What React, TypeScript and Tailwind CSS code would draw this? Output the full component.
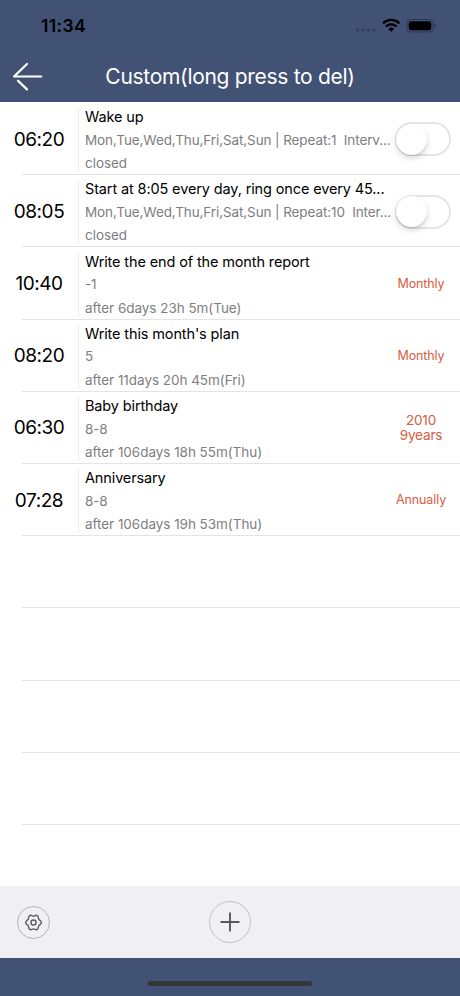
import { useState } from "react";

type Alarm = {
  time: string;
  title: string;
  detail: string;
  status: string;
  tags?: string[];
  large?: boolean;
};

const alarms: Alarm[] = [
  {
    time: "06:20",
    title: "Wake up",
    detail: "Mon,Tue,Wed,Thu,Fri,Sat,Sun | Repeat:1  Interv...",
    status: "closed",
  },
  {
    time: "08:05",
    title: "Start at 8:05 every day, ring once every 45...",
    detail: "Mon,Tue,Wed,Thu,Fri,Sat,Sun | Repeat:10  Inter...",
    status: "closed",
  },
  {
    time: "10:40",
    title: "Write the end of the month report",
    detail: "-1",
    status: "after 6days 23h 5m(Tue)",
    tags: ["Monthly"],
  },
  {
    time: "08:20",
    title: "Write this month's plan",
    detail: "5",
    status: "after 11days 20h 45m(Fri)",
    tags: ["Monthly"],
  },
  {
    time: "06:30",
    title: "Baby birthday",
    detail: "8-8",
    status: "after 106days 18h 55m(Thu)",
    tags: ["2010", "9years"],
    large: true,
  },
  {
    time: "07:28",
    title: "Anniversary",
    detail: "8-8",
    status: "after 106days 19h 53m(Thu)",
    tags: ["Annually"],
  },
];

const emptyRows = [0, 1, 2, 3];

function StatusBar() {
  return (
    <div className="flex h-[51px] items-center justify-between pl-[41px] pr-[24px]">
      <span className="text-[17.5px] font-semibold leading-[20px] tracking-[0.4px] text-black">11:34</span>
      <svg width="82" height="18" viewBox="0 0 82 18">
        <g fill="#35405f">
          <circle cx="3.6" cy="13" r="1.7" />
          <circle cx="9" cy="13" r="1.7" />
          <circle cx="14.4" cy="13" r="1.7" />
          <circle cx="20" cy="13" r="1.7" />
        </g>
        <g fill="none" stroke="#000" strokeWidth="2.4">
          <path d="M29 6.3a11.6 11.6 0 0 1 16.4 0" />
          <path d="M32 9.5a7.4 7.4 0 0 1 10.4 0" />
        </g>
        <path d="M37.2 14.8 34.3 11.9a4.1 4.1 0 0 1 5.8 0Z" fill="#000" />
        <rect x="53" y="2.5" width="26" height="12.5" rx="3.8" fill="none" stroke="#2b3652" />
        <rect x="54.7" y="4.2" width="22.6" height="9.1" rx="2.2" fill="#000" />
        <path d="M80.2 6.8v4c1.9-.7 1.9-3.3 0-4Z" fill="#2b3652" />
      </svg>
    </div>
  );
}

function Header() {
  return (
    <header className="h-[102px] shrink-0 bg-[#425275]">
      <StatusBar />
      <div className="grid h-[51px] grid-cols-[52px_1fr_52px] items-center">
        <button aria-label="Back" className="pl-[12px]">
          <svg width="32" height="30" viewBox="0 0 32 30" fill="none" stroke="#fff" strokeWidth="2.2" strokeLinecap="round">
            <path d="M15 2 2 14.5H29.2M6 18.7 15 27.4" strokeLinejoin="round" />
          </svg>
        </button>
        <h1 className="whitespace-nowrap text-center text-[21px] leading-[28px] tracking-[-0.3px] text-white">
          Custom(long press to del)
        </h1>
      </div>
    </header>
  );
}

function Toggle() {
  const [on, setOn] = useState(false);
  return (
    <button
      role="switch"
      aria-checked={on}
      onClick={() => setOn(!on)}
      className={`flex h-[34px] w-[56px] items-center rounded-full border-2 border-[#e5e5e6] ${
        on ? "justify-end bg-[#4cd964]" : "justify-start bg-white"
      }`}
    >
      <span className="-ml-px size-[31px] shrink-0 rounded-full bg-white shadow-[0_3px_6px_rgba(0,0,0,0.16),0_1px_1px_rgba(0,0,0,0.12)]" />
    </button>
  );
}

function AlarmRow({ alarm }: { alarm: Alarm }) {
  return (
    <li className="flex h-[72.2px] shrink-0 flex-col">
      <div className="flex min-h-0 flex-1 pt-[2.5px]">
        <div className="flex w-[78px] items-center justify-center text-[19px] tracking-[-0.45px] text-black">
          {alarm.time}
        </div>
        <div className="mb-[2px] mt-[2px] w-px bg-[#ececee]" />
        <div className="w-[308px] whitespace-pre pl-[6px] text-[13.5px] leading-[23.3px] tracking-[-0.04px] text-[#7e7e80]">
          <p className="-mt-[0.4px] mb-[0.4px] text-[14.5px] tracking-[-0.13px] text-black">{alarm.title}</p>
          <p className="tracking-[-0.1px]">{alarm.detail}</p>
          <p>{alarm.status}</p>
        </div>
        <div className="flex flex-1 items-center justify-end pb-[1px] pr-[9px]">
          {alarm.tags ? (
            <div
              className={`w-[60px] text-center text-[#d95b3f] ${
                alarm.large ? "text-[13.5px] leading-[15.5px] tracking-[-0.15px]" : "text-[12.5px] leading-[16px] tracking-[-0.1px]"
              }`}
            >
              {alarm.tags.map((tag) => (
                <div key={tag}>{tag}</div>
              ))}
            </div>
          ) : (
            <Toggle />
          )}
        </div>
      </div>
      <div className="ml-[22px] h-px bg-[#e4e4e6]" />
    </li>
  );
}

function Toolbar() {
  return (
    <div className="grid h-[72px] shrink-0 grid-cols-[1fr_42px_1fr] items-center bg-[#efeff4]">
      <button
        aria-label="Settings"
        className="ml-[17px] flex size-[33px] items-center justify-center rounded-full border border-[#b5b5b8]"
      >
        <svg width="17" height="17" viewBox="0 0 18 18" fill="none" stroke="#5c5c60" strokeWidth="1.5" strokeLinejoin="round">
          <path d="M4.6 2.2Q5.8 .9 7.2 1.8Q9 2.7 10.8 1.8Q12.2 .9 13.4 2.2Q14.3 3 14.2 4.4Q14.3 5.8 15.8 6.7Q17.3 7.6 17.2 9Q17.3 10.4 15.8 11.3Q14.3 12.2 14.2 13.6Q14.3 15 13.4 15.8Q12.2 17.1 10.8 16.2Q9 15.3 7.2 16.2Q5.8 17.1 4.6 15.8Q3.7 15 3.8 13.6Q3.7 12.2 2.2 11.3Q.7 10.4 .8 9Q.7 7.6 2.2 6.7Q3.7 5.8 3.8 4.4Q3.7 3 4.6 2.2Z" />
          <circle cx="9" cy="9" r="2.7" />
        </svg>
      </button>
      <button
        aria-label="Add alarm"
        className="flex size-[42px] items-center justify-center rounded-full border border-[#c3c3c7]"
      >
        <svg width="20" height="20" viewBox="0 0 20 20" stroke="#57575b" strokeWidth="1.9" strokeLinecap="round">
          <path d="M10 1.2v17.6M1.2 10h17.6" />
        </svg>
      </button>
    </div>
  );
}

export default function App() {
  return (
    <div className="flex h-[996px] w-[460px] flex-col overflow-hidden bg-white font-['Inter',sans-serif]">
      <Header />
      <ul className="flex min-h-0 flex-1 flex-col pt-[1.1px]">
        {alarms.map((alarm) => (
          <AlarmRow key={alarm.time} alarm={alarm} />
        ))}
        {emptyRows.map((row) => (
          <li key={row} className="flex h-[72.2px] shrink-0 flex-col justify-end">
            <div className="ml-[22px] h-px bg-[#e4e4e6]" />
          </li>
        ))}
      </ul>
      <Toolbar />
      <footer className="flex h-[38px] shrink-0 justify-center bg-[#425275] pt-[23px]">
        <div className="h-[5px] w-[164px] rounded-full bg-[#353638]" />
      </footer>
    </div>
  );
}
